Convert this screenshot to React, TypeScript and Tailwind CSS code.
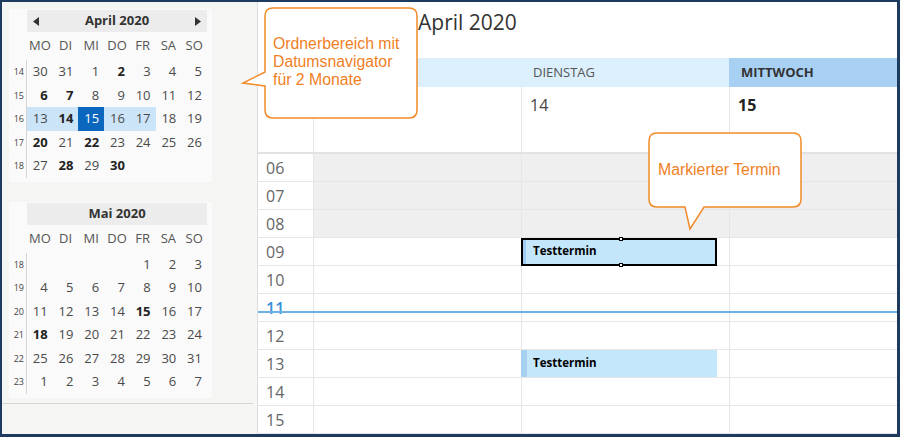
import React from 'react'

type Day = { d: number | null; bold?: boolean; sel?: boolean; week?: boolean }

const b = (d: number): Day => ({ d, bold: true })
const n = (d: number): Day => ({ d })
const e: Day = { d: null }

const april: { wk: number; days: Day[] }[] = [
  { wk: 14, days: [n(30), n(31), n(1), b(2), n(3), n(4), n(5)] },
  { wk: 15, days: [b(6), b(7), n(8), n(9), n(10), n(11), n(12)] },
  {
    wk: 16,
    days: [
      { d: 13, week: true },
      { d: 14, bold: true, week: true },
      { d: 15, sel: true },
      { d: 16, week: true },
      { d: 17, week: true },
      n(18),
      n(19),
    ],
  },
  { wk: 17, days: [b(20), n(21), b(22), n(23), n(24), n(25), n(26)] },
  { wk: 18, days: [n(27), b(28), n(29), b(30), e, e, e] },
]

const mai: { wk: number; days: Day[] }[] = [
  { wk: 18, days: [e, e, e, e, n(1), n(2), n(3)] },
  { wk: 19, days: [n(4), n(5), n(6), n(7), n(8), n(9), n(10)] },
  { wk: 20, days: [n(11), n(12), n(13), n(14), b(15), n(16), n(17)] },
  { wk: 21, days: [b(18), n(19), n(20), n(21), n(22), n(23), n(24)] },
  { wk: 22, days: [n(25), n(26), n(27), n(28), n(29), n(30), n(31)] },
  { wk: 23, days: [n(1), n(2), n(3), n(4), n(5), n(6), n(7)] },
]

const dayNames = ['MO', 'DI', 'MI', 'DO', 'FR', 'SA', 'SO']

function MiniMonth({ title, rows, arrows }: { title: string; rows: { wk: number; days: Day[] }[]; arrows?: boolean }) {
  return (
    <div className="ml-[7px] w-[203px] bg-[#fafafa] pt-[1px] pb-[4px]">
      <div className="ml-[18px] w-[180px] h-[22px] bg-[#ececec] flex items-center justify-between px-[6px]">
        <span className="w-[6px]">
          {arrows && (
            <svg width="6" height="9" viewBox="0 0 6 9">
              <path d="M6 0 L0 4.5 L6 9 Z" fill="#333" />
            </svg>
          )}
        </span>
        <span className="text-[13px] font-bold text-[#333]">{title}</span>
        <span className="w-[6px]">
          {arrows && (
            <svg width="6" height="9" viewBox="0 0 6 9">
              <path d="M0 0 L6 4.5 L0 9 Z" fill="#333" />
            </svg>
          )}
        </span>
      </div>
      <div className="flex h-[28px] items-center">
        <div className="w-[18px]" />
        <div className="grid grid-cols-7 w-[180px] text-[13px] text-[#555]">
          {dayNames.map((d) => (
            <div key={d} className="text-center">
              {d}
            </div>
          ))}
        </div>
      </div>
      {rows.map((r) => (
        <div key={r.wk} className="flex h-[23.5px]">
          <div className="w-[18px] border-r border-[#d4d4d4] pr-[2px] text-right text-[9px] leading-[23.5px] text-[#444]">
            {r.wk}
          </div>
          <div className="grid grid-cols-7 w-[180px] text-[13px]">
            {r.days.map((d, i) => (
              <div
                key={i}
                className={
                  'text-right pr-[5px] leading-[23.5px] ' +
                  (d.sel ? 'bg-[#0a67bd] text-white ' : d.week ? 'bg-[#cce4f7] text-[#4a4a4a] ' : 'text-[#4a4a4a] ') +
                  (d.bold ? 'font-bold text-[#222]' : '')
                }
              >
                {d.d ?? ''}
              </div>
            ))}
          </div>
        </div>
      ))}
    </div>
  )
}

const hours = ['06', '07', '08', '09', '10', '11', '12', '13', '14', '15']

function Event({ selected }: { selected?: boolean }) {
  if (selected) {
    return (
      <div className="relative w-[196px] h-[28px] -ml-px border-2 border-black bg-[#c3e6fb] flex">
        <div className="w-[3px] bg-[#a3cdf0]" />
        <div className="pl-[7px] pb-[3px] flex items-center text-[11.5px] font-bold text-black">Testtermin</div>
        <div className="absolute left-[96px] -top-[3px] w-[4px] h-[4px] bg-white border border-black" />
        <div className="absolute left-[96px] -bottom-[3px] w-[4px] h-[4px] bg-white border border-black" />
      </div>
    )
  }
  return (
    <div className="w-[196px] h-[27px] -ml-px bg-[#c4e7fb] flex">
      <div className="w-[6px] bg-[#a8d0f1]" />
      <div className="pl-[6px] pb-[2px] flex items-center text-[11.5px] font-bold text-black">Testtermin</div>
    </div>
  )
}

export default function App() {
  return (
    <div
      className="relative w-[900px] h-[437px] overflow-hidden border-t-2 border-l-2 border-r-[3px] border-b-[3px] border-[#1d3a5f] flex bg-white"
      style={{ fontFamily: '"Open Sans", "Noto Sans", sans-serif' }}
    >
      {/* folder pane with date navigator */}
      <div className="w-[256px] shrink-0 bg-[#f5f5f4] border-r border-[#dedede] pt-[7px] flex flex-col">
        <MiniMonth title="April 2020" rows={april} arrows />
        <div className="mt-[20px]">
          <MiniMonth title="Mai 2020" rows={mai} />
        </div>
        <div className="mt-[5px] mr-[4px] border-t border-[#d6d6d6]" />
      </div>

      {/* calendar */}
      <div className="flex-1 flex flex-col">
        <div className="h-[56px] pl-[160px] pt-[4px] text-[21px] leading-[32px] text-[#333]">April 2020</div>
        <div className="grid grid-cols-[55px_208px_208px_1fr] h-[29px] text-[13px]">
          <div className="bg-white" />
          <div className="bg-[#dbeffc]" />
          <div className="bg-[#dbeffc] flex items-center pl-[12px] text-[#555]">DIENSTAG</div>
          <div className="bg-[#a8d0f3] flex items-center pl-[12px] font-bold text-[#333]">MITTWOCH</div>
        </div>
        <div className="grid grid-cols-[55px_208px_208px_1fr] h-[67px] border-b-2 border-[#e2e2e2] text-[16px]">
          <div />
          <div className="border-l border-[#e6e6e6]" />
          <div className="border-l border-[#e6e6e6] pl-[8px] pt-[6px] text-[#444]">14</div>
          <div className="border-l border-[#e6e6e6] pl-[8px] pt-[6px] font-bold text-[#222]">15</div>
        </div>
        {hours.map((h) => {
          const off = Number(h) < 9
          const now = h === '11'
          return (
            <div key={h} className="relative grid grid-cols-[55px_208px_208px_1fr] h-[28px] border-b border-[#e6e6e6]">
              <div
                className={
                  'flex items-center pl-[8px] text-[16px] ' + (now ? 'text-[#3b8fd6] font-semibold' : 'text-[#666]')
                }
              >
                {h}
              </div>
              <div className={'border-l border-[#e6e6e6] ' + (off ? 'bg-[#efefef]' : '')} />
              <div className={'border-l border-[#e6e6e6] ' + (off ? 'bg-[#efefef]' : '')}>
                {h === '09' && <Event selected />}
                {h === '13' && <Event />}
              </div>
              <div className={'border-l border-[#e6e6e6] ' + (off ? 'bg-[#efefef]' : '')} />
              {now && <div className="absolute left-0 right-0 top-[17px] h-[2px] bg-[#6fb0e4]" />}
            </div>
          )
        })}
      </div>

      {/* callouts */}
      <svg className="absolute left-[238px] top-[4px]" width="180" height="115" viewBox="0 0 180 115">
        <path
          d="M33 2 H169 Q177 2 177 10 V104 Q177 112 169 112 H33 Q25 112 25 104 V80 L3 77 L25 66 V10 Q25 2 33 2 Z"
          fill="white"
          stroke="#f28a2a"
          strokeWidth="1.5"
        />
      </svg>
      <div
        className="absolute left-[271px] top-[33px] text-[15.8px] leading-[18px] text-[#ef7f1f]"
        style={{ fontFamily: '"Liberation Sans", Arial, sans-serif' }}
      >
        Ordnerbereich mit
        <br />
        Datumsnavigator
        <br />
        für 2 Monate
      </div>
      <svg className="absolute left-[644px] top-[128px]" width="158" height="102" viewBox="0 0 158 102">
        <path
          d="M11 3 H147 Q155 3 155 11 V69 Q155 77 147 77 H58 L44 99 L39 77 H11 Q3 77 3 69 V11 Q3 3 11 3 Z"
          fill="white"
          stroke="#f28a2a"
          strokeWidth="1.5"
        />
      </svg>
      <div
        className="absolute left-[656px] top-[159px] text-[15.8px] leading-[18px] text-[#ef7f1f]"
        style={{ fontFamily: '"Liberation Sans", Arial, sans-serif' }}
      >
        Markierter Termin
      </div>
    </div>
  )
}
